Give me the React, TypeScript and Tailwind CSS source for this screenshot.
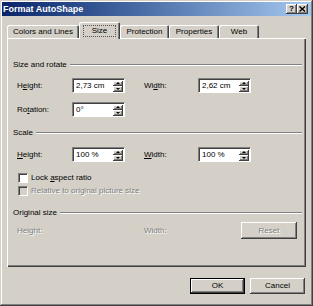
import React from "react";

const raised =
  "bg-[#d4d0c8] shadow-[inset_-1px_-1px_#404040,inset_1px_1px_#ffffff,inset_-2px_-2px_#808080]";
const disabledText = "text-[#808080] [text-shadow:1px_1px_0_#ffffff]";

function U({ children }: { children: React.ReactNode }) {
  return <span className="underline underline-offset-[1px]">{children}</span>;
}

function Spin({ value }: { value: string }) {
  return (
    <div className="w-[53px] h-[15px] bg-white border border-t-[#808080] border-l-[#808080] border-r-white border-b-white shadow-[inset_1px_1px_#404040] flex items-center">
      <div className="flex-1 pl-[3px] pt-[1px] leading-none">{value}</div>
      <div className="w-[10px] h-[11px] mr-[1px] mt-[1px] flex flex-col">
        <div className={`${raised} flex-1 flex items-center justify-center`}>
          <div className="w-0 h-0 border-l-[2px] border-r-[2px] border-b-[2px] border-l-transparent border-r-transparent border-b-black" />
        </div>
        <div className={`${raised} flex-1 flex items-center justify-center`}>
          <div className="w-0 h-0 border-l-[2px] border-r-[2px] border-t-[2px] border-l-transparent border-r-transparent border-t-black" />
        </div>
      </div>
    </div>
  );
}

function Header({ title }: { title: string }) {
  return (
    <div className="flex items-center h-[10px] gap-[3px]">
      <span className="leading-none">{title}</span>
      <div className="flex-1 h-[2px] border-t border-t-[#808080] border-b border-b-white" />
    </div>
  );
}

function Tab({ label, w }: { label: string; w: string }) {
  return (
    <div
      className={`${w} h-[13px] mb-[1px] flex items-center justify-center rounded-t-[2px] bg-[#d4d0c8] shadow-[inset_1px_1px_#ffffff,inset_-1px_0_#404040,inset_-2px_0_#808080]`}
    >
      <span className="leading-none">{label}</span>
    </div>
  );
}

export default function App() {
  return (
    <div
      className="w-[313px] h-[306px] bg-[#d4d0c8] p-[2px] flex flex-col text-[8px] text-black shadow-[inset_-1px_-1px_#404040,inset_1px_1px_#d4d0c8,inset_-2px_-2px_#808080,inset_2px_2px_#ffffff]"
      style={{ fontFamily: '"Liberation Sans", Arial, sans-serif' }}
    >
      {/* Title bar */}
      <div className="h-[14px] flex items-center bg-gradient-to-r from-[#0a246a] to-[#a6caf0] pl-[1px] pr-[3px]">
        <span className="flex-1 text-white font-bold text-[9px] leading-none">Format AutoShape</span>
        <div className={`${raised} w-[11px] h-[10px] flex items-center justify-center`}>
          <span className="font-bold text-[8px] leading-none">?</span>
        </div>
        <div className={`${raised} w-[11px] h-[10px] flex items-center justify-center`}>
          <svg width="7" height="6" viewBox="0 0 7 6">
            <path d="M0.5 0.5 L6 5.5 M6 0.5 L0.5 5.5" stroke="black" strokeWidth="1.4" />
          </svg>
        </div>
      </div>

      {/* Tabs */}
      <div className="mt-[6px] ml-[5px] h-[17px] mb-[-1px] relative z-10 flex items-end">
        <Tab label="Colors and Lines" w="w-[72px]" />
        <div className="w-[41px] h-[17px] flex items-start justify-center pt-[3px] rounded-t-[2px] bg-[#d4d0c8] shadow-[inset_1px_1px_#ffffff,inset_-1px_0_#404040,inset_-2px_0_#808080]">
          <div className="w-[33px] h-[12px] border border-dotted border-[#555] flex items-center justify-center">
            <span className="leading-none">Size</span>
          </div>
        </div>
        <Tab label="Protection" w="w-[49px]" />
        <Tab label="Properties" w="w-[50px]" />
        <Tab label="Web" w="w-[40px]" />
      </div>

      {/* Panel */}
      <div className="ml-[5px] w-[299px] h-[229px] flex flex-col pl-[6px] pr-[4px] shadow-[inset_1px_1px_#ffffff,inset_-1px_-1px_#404040,inset_-2px_-2px_#808080]">
        <div className="mt-[22px]">
          <Header title="Size and rotate" />
        </div>

        <div className="mt-[8px] h-[15px] flex items-center">
          <span className="ml-[4px] w-[55px] leading-none">
            H<U>e</U>ight:
          </span>
          <Spin value="2,73 cm" />
          <span className="ml-[19px] w-[54px] leading-none">
            Wi<U>d</U>th:
          </span>
          <Spin value="2,62 cm" />
        </div>

        <div className="mt-[9px] h-[15px] flex items-center">
          <span className="ml-[4px] w-[55px] leading-none">
            Ro<U>t</U>ation:
          </span>
          <Spin value="0°" />
        </div>

        <div className="mt-[11px]">
          <Header title="Scale" />
        </div>

        <div className="mt-[9px] h-[15px] flex items-center">
          <span className="ml-[4px] w-[55px] leading-none">
            <U>H</U>eight:
          </span>
          <Spin value="100 %" />
          <span className="ml-[19px] w-[54px] leading-none">
            <U>W</U>idth:
          </span>
          <Spin value="100 %" />
        </div>

        <div className="mt-[11px] h-[10px] flex items-center gap-[3px]">
          <div className="ml-[5px] w-[10px] h-[10px] bg-white border border-t-[#808080] border-l-[#808080] border-r-white border-b-white shadow-[inset_1px_1px_#404040]" />
          <span className="leading-none">
            Lock <U>a</U>spect ratio
          </span>
        </div>

        <div className="mt-[3px] h-[10px] flex items-center gap-[3px]">
          <div className="ml-[5px] w-[10px] h-[10px] bg-[#d4d0c8] border border-t-[#808080] border-l-[#808080] border-r-white border-b-white shadow-[inset_1px_1px_#404040]" />
          <span className={`leading-none ${disabledText}`}>Relative to original picture size</span>
        </div>

        <div className="mt-[12px]">
          <Header title="Original size" />
        </div>

        <div className="mt-[4px] h-[17px] flex items-center">
          <span className={`ml-[4px] w-[127px] leading-none ${disabledText}`}>Height:</span>
          <span className={`w-[97px] leading-none ${disabledText}`}>Width:</span>
          <div className={`${raised} w-[56px] h-[17px] flex items-center justify-center`}>
            <span className={`leading-none ${disabledText}`}>Reset</span>
          </div>
        </div>
      </div>

      {/* Bottom buttons */}
      <div className="mt-[11px] flex justify-end gap-[5px] mr-[6px]">
        <div className="w-[55px] h-[16px] border border-black">
          <div className={`${raised} w-full h-full flex items-center justify-center`}>
            <span className="leading-none">OK</span>
          </div>
        </div>
        <div className={`${raised} w-[55px] h-[16px] flex items-center justify-center`}>
          <span className="leading-none">Cancel</span>
        </div>
      </div>
    </div>
  );
}
